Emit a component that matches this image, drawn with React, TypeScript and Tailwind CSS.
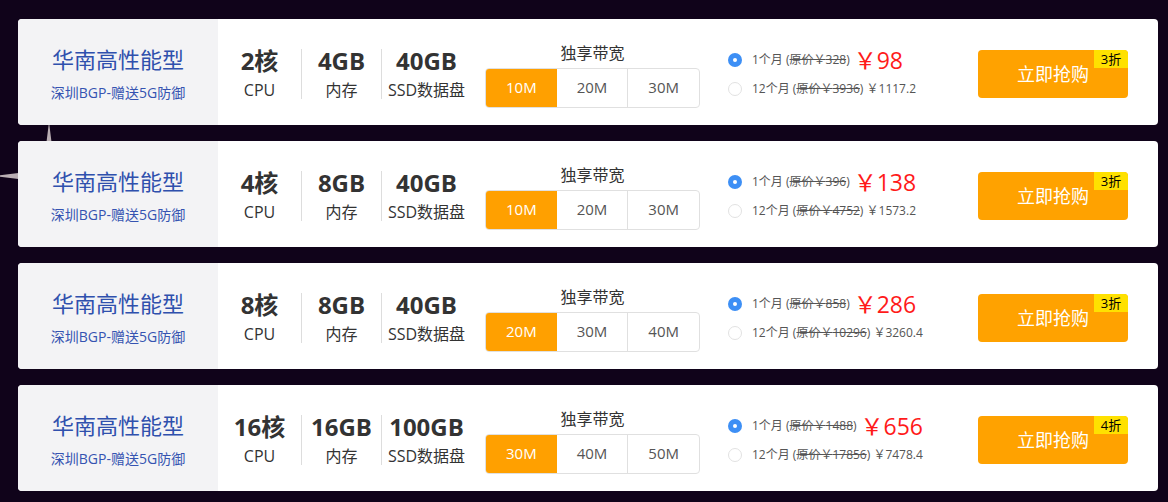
import React from "react";

type Plan = {
  cpu: string;
  mem: string;
  disk: string;
  bw: string[];
  orig1: string;
  price1: string;
  orig12: string;
  price12: string;
  disc: string;
};

const plans: Plan[] = [
  { cpu: "2核", mem: "4GB", disk: "40GB", bw: ["10M", "20M", "30M"], orig1: "328", price1: "98", orig12: "3936", price12: "1117.2", disc: "3折" },
  { cpu: "4核", mem: "8GB", disk: "40GB", bw: ["10M", "20M", "30M"], orig1: "396", price1: "138", orig12: "4752", price12: "1573.2", disc: "3折" },
  { cpu: "8核", mem: "8GB", disk: "40GB", bw: ["20M", "30M", "40M"], orig1: "858", price1: "286", orig12: "10296", price12: "3260.4", disc: "3折" },
  { cpu: "16核", mem: "16GB", disk: "100GB", bw: ["30M", "40M", "50M"], orig1: "1488", price1: "656", orig12: "17856", price12: "7478.4", disc: "4折" },
];

function Spec({ value, label, w, divider }: { value: string; label: string; w: string; divider?: boolean }) {
  return (
    <div className={`flex items-center h-[50px] ${w} ${divider ? "border-l border-[#dddddd]" : ""}`}>
      <div className="flex flex-col items-center w-full">
        <div className="text-[24px] leading-[28px] font-bold text-[#333333]">{value}</div>
        <div className="text-[16px] leading-[22px] mt-[4px] text-[#333333]">{label}</div>
      </div>
    </div>
  );
}

function Card({ p }: { p: Plan }) {
  return (
    <div className="flex h-[106px] bg-white rounded-[4px] overflow-hidden">
      <div className="w-[200px] shrink-0 bg-[#f3f3f5] flex flex-col items-center justify-center pt-[2px]">
        <div className="text-[22px] leading-[28px] text-[#2f50ad]">华南高性能型</div>
        <div className="text-[14px] leading-[18px] mt-[11px] text-[#3553b1]">深圳BGP-赠送5G防御</div>
      </div>
      <div className="flex pt-[4px]">
        <div className="flex items-center">
          <Spec value={p.cpu} label="CPU" w="w-[83px]" />
          <Spec value={p.mem} label="内存" w="w-[80px]" divider />
          <Spec value={p.disk} label="SSD数据盘" w="w-[90px]" divider />
        </div>
        <div className="ml-[14px] w-[215px] flex flex-col items-center justify-center pt-[2px]">
          <div className="text-[16px] leading-[20px] text-[#333333]">独享带宽</div>
          <div className="mt-[5px] flex w-[215px] h-[40px] rounded-[4px] border border-[#e0e0e0] overflow-hidden">
            {p.bw.map((b, i) => (
              <div
                key={b}
                className={`flex-1 flex items-center justify-center text-[15px] ${
                  i === 0 ? "bg-[#ffa000] text-white" : "text-[#555555]"
                } ${i === 2 ? "border-l border-[#e0e0e0]" : ""}`}
              >
                {b}
              </div>
            ))}
          </div>
        </div>
        <div className="ml-[28px] w-[250px] flex flex-col justify-center">
          <div className="flex items-center h-[28px]">
            <span className="w-[14px] h-[14px] rounded-full bg-[#3d8ff5] flex items-center justify-center shrink-0">
              <span className="w-[4px] h-[4px] rounded-full bg-white" />
            </span>
            <span className="ml-[10px] text-[12px] text-[#555555]">
              1个月 (<span className="line-through">原价￥{p.orig1}</span>)
            </span>
            <span className="ml-[4px] text-[23px] leading-[28px] text-[#ff1a1a]">￥{p.price1}</span>
          </div>
          <div className="flex items-center h-[28px] mt-[1px]">
            <span className="w-[14px] h-[14px] rounded-full border border-[#e2e2e2] shrink-0" />
            <span className="ml-[10px] text-[12px] text-[#555555]">
              12个月 (<span className="line-through">原价￥{p.orig12}</span>) ￥{p.price12}
            </span>
          </div>
        </div>
        <div className="flex items-center">
          <div className="relative w-[150px] h-[48px] rounded-[4px] bg-[#ffa200] flex items-center justify-center text-white text-[18px]">
            立即抢购
            <span className="absolute top-0 right-0 w-[34px] h-[18px] rounded-tr-[4px] bg-[#ffe100] text-[13px] leading-[18px] text-black flex items-center justify-center">
              {p.disc}
            </span>
          </div>
        </div>
      </div>
    </div>
  );
}

export default function App() {
  return (
    <div className="relative w-[1168px] h-[502px] bg-[#10031a] overflow-hidden font-['Open_Sans','Noto_Sans_CJK_SC',sans-serif]">
      <svg className="absolute left-0 top-0" width="120" height="240" viewBox="0 0 120 240">
        <polygon points="49,122 55,170 104,176 55,182 49,232 43,182 -6,176 43,170" fill="#b9aeb3" />
      </svg>
      <div className="relative flex flex-col gap-[16px] pt-[19px] pl-[18px] w-[1158px]">
        {plans.map((p, i) => (
          <Card key={i} p={p} />
        ))}
      </div>
    </div>
  );
}
